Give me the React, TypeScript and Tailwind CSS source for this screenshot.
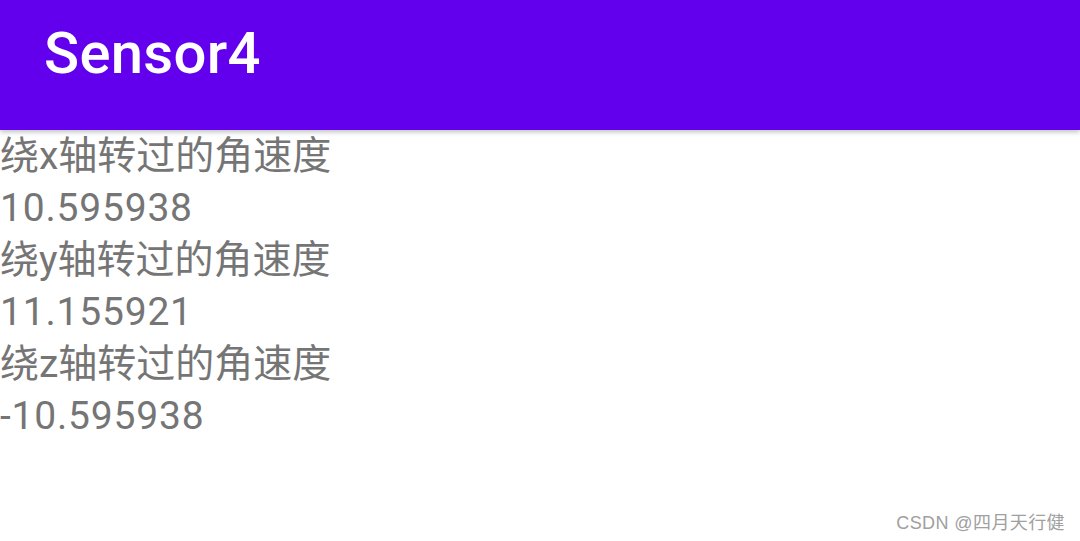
export default function App() {
  const lines = [
    { t: '绕x轴转过的角速度', num: false },
    { t: '10.595938', num: true },
    { t: '绕y轴转过的角速度', num: false },
    { t: '11.155921', num: true },
    { t: '绕z轴转过的角速度', num: false },
    { t: '-10.595938', num: true },
  ];
  return (
    <div className="relative flex h-[541px] w-[1080px] flex-col overflow-hidden bg-white font-['Roboto','Noto_Sans_CJK_SC',sans-serif]">
      <div className="z-10 flex h-[130px] shrink-0 items-center bg-[#6200ee] pl-[44px] pb-[25px] shadow-[0_2px_5px_rgba(0,0,0,0.25)]">
        <span className="text-[58px] font-medium leading-none tracking-[0.3px] text-white">Sensor4</span>
      </div>
      <div className="flex flex-col">
        {lines.map((l, i) => (
          <div
            key={i}
            className={
              l.num
                ? 'h-[52px] text-[39px] leading-[52px] tracking-[0.8px] text-[#757575]'
                : 'h-[52px] text-[39px] leading-[52px] text-[#757575]'
            }
          >
            {l.t}
          </div>
        ))}
      </div>
      <div className="absolute bottom-[9px] right-[15px] text-[18px] leading-none tracking-[0.4px] text-[#a0a0a0] font-['Liberation_Sans','Noto_Sans_CJK_SC',sans-serif]">
        CSDN @四月天行健
      </div>
    </div>
  );
}
